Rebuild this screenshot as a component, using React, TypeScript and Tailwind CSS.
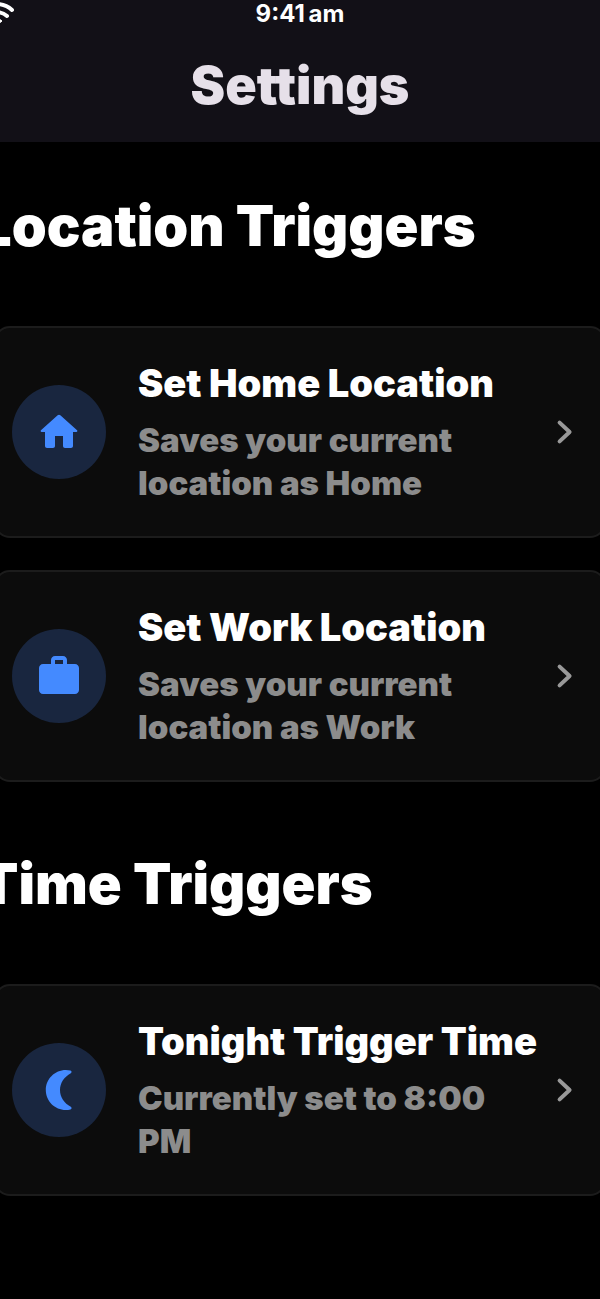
import type { ReactNode } from 'react';

interface TriggerCardProps {
  title: string;
  description: string;
  icon: ReactNode;
}

const HomeIcon = () => (
  <svg viewBox="0 0 24 24" className="size-12" fill="currentColor" aria-hidden="true">
    <path d="M10 19v-5h4v5c0 .55.45 1 1 1h3c.55 0 1-.45 1-1v-7h1.7c.46 0 .68-.57.33-.87L12.67 3.6c-.38-.34-.96-.34-1.34 0l-8.36 7.53c-.34.3-.13.87.33.87H5v7c0 .55.45 1 1 1h3c.55 0 1-.45 1-1z" />
  </svg>
);

const WorkIcon = () => (
  <svg viewBox="0 0 24 24" className="size-12" fill="currentColor" aria-hidden="true">
    <path d="M20 6h-4V4c0-1.11-.89-2-2-2h-4c-1.11 0-2 .89-2 2v2H4c-1.11 0-1.99.89-1.99 2L2 19c0 1.11.89 2 2 2h16c1.11 0 2-.89 2-2V8c0-1.11-.89-2-2-2zm-6 0h-4V4h4v2z" />
  </svg>
);

const MoonIcon = () => (
  <svg viewBox="0 0 24 24" className="size-12" fill="currentColor" aria-hidden="true">
    <path d="M15.4 2c.8 0 1.5.1 2.3.3.7.2.8.9.2 1.3-3.3 1.8-5.4 4.8-5.4 8.4s2.1 6.6 5.4 8.4c.6.4.5 1.1-.2 1.3-.8.2-1.5.3-2.3.3-5.5 0-10-4.5-10-10s4.5-10 10-10z" />
  </svg>
);

const WifiIcon = () => (
  <svg viewBox="0 0 34 26" className="-ml-5 h-[26px] w-[34px]" fill="none" stroke="currentColor" strokeWidth="4" strokeLinecap="round" aria-hidden="true">
    <path d="M2 9a22 22 0 0 1 30 0" />
    <path d="M7 15a15 15 0 0 1 20 0" />
    <path d="M12 20a7 7 0 0 1 10 0l-5 4z" fill="currentColor" strokeWidth="1" strokeLinejoin="round" />
  </svg>
);

const TriggerCard = ({ title, description, icon }: TriggerCardProps) => (
  <button
    type="button"
    className="flex min-h-[212px] items-center rounded-2xl border-2 border-[#1c1c1c] bg-[#0c0c0c] px-4 text-left"
  >
    <span className="flex size-[94px] shrink-0 items-center justify-center rounded-full bg-[#19263f] text-[#448aff]">
      {icon}
    </span>
    <span className="ml-8 flex-1">
      <span className="block text-[38px] leading-[48px] font-black text-white">{title}</span>
      <span className="mt-3 block text-[33px] leading-[43px] font-black text-[#8c8c8c]">{description}</span>
    </span>
    <svg viewBox="0 0 24 24" className="size-12 shrink-0" fill="none" stroke="#999999" strokeWidth="2" strokeLinecap="round" strokeLinejoin="round" aria-hidden="true">
      <path d="M9.8 7.3l5 4.7-5 4.7" />
    </svg>
  </button>
);

const Section = ({ title, children }: { title: string; children: ReactNode }) => (
  <section>
    <h2 className="text-[56px] leading-[64px] font-black text-white">{title}</h2>
    <div className="mx-3.5 mt-[68px] flex flex-col gap-8">{children}</div>
  </section>
);

export default function App() {
  return (
    <div className="min-h-screen overflow-x-hidden bg-black font-['Inter',sans-serif]">
      <header className="bg-[#121017] pb-6">
        <div className="grid h-7 grid-cols-3 items-center text-white">
          <WifiIcon />
          <span className="text-center text-[24px] leading-7 font-bold">9:41{'\u2009'}am</span>
        </div>
        <h1 className="pt-[26px] text-center text-[52px] leading-[64px] font-black text-[#e6e0e9]">Settings</h1>
      </header>

      {/* wider than the screen: both sides bleed off */}
      <main className="-mx-5 flex flex-col gap-[70px] pt-[52px] pb-24">
        <Section title="Location Triggers">
          <TriggerCard title="Set Home Location" description="Saves your current location as Home" icon={<HomeIcon />} />
          <TriggerCard title="Set Work Location" description="Saves your current location as Work" icon={<WorkIcon />} />
        </Section>
        <Section title="Time Triggers">
          <TriggerCard title="Tonight Trigger Time" description="Currently set to 8:00 PM" icon={<MoonIcon />} />
        </Section>
      </main>
    </div>
  );
}
